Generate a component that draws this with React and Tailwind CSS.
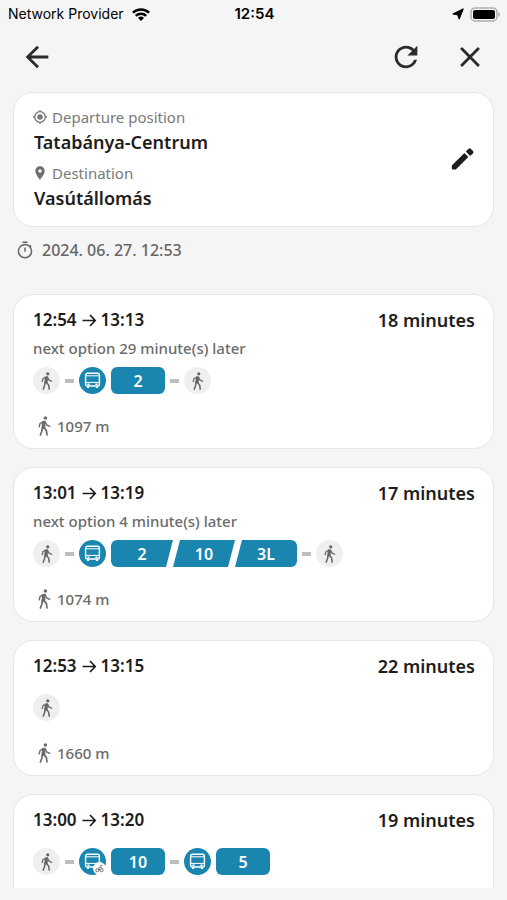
import { MdArrowBack, MdClose, MdPlace, MdRefresh } from 'react-icons/md'

const journeys = [
  {
    id: 1,
    start: '12:54',
    end: '13:13',
    duration: '18 minutes',
    next: 'next option 29 minute(s) later',
    legs: [{ type: 'walk' }, { type: 'bus', lines: ['2'] }, { type: 'walk' }],
    distance: '1097 m',
  },
  {
    id: 2,
    start: '13:01',
    end: '13:19',
    duration: '17 minutes',
    next: 'next option 4 minute(s) later',
    legs: [{ type: 'walk' }, { type: 'bus', lines: ['2', '10', '3L'] }, { type: 'walk' }],
    distance: '1074 m',
  },
  {
    id: 3,
    start: '12:53',
    end: '13:15',
    duration: '22 minutes',
    legs: [{ type: 'walk' }],
    distance: '1660 m',
  },
  {
    id: 4,
    start: '13:00',
    end: '13:20',
    duration: '19 minutes',
    legs: [{ type: 'walk' }, { type: 'bus', lines: ['10'], bike: true }, { type: 'bus', lines: ['5'] }],
  },
]

function App() {
  return (
    <div className="flex h-screen flex-col overflow-hidden bg-[#f5f5f5] pb-3 font-['Noto_Sans',sans-serif] text-[#1d1d1d]">
      <StatusBar />

      <header className="flex h-[58px] shrink-0 items-center justify-between px-5 text-[#2b2b2b]">
        <button aria-label="Back">
          <MdArrowBack className="size-[34px]" />
        </button>
        <div className="flex items-center gap-[30px]">
          <button aria-label="Refresh">
            <MdRefresh className="size-[34px]" />
          </button>
          <button aria-label="Close">
            <MdClose className="size-[34px]" />
          </button>
        </div>
      </header>

      <main className="flex min-h-0 flex-1 flex-col px-[13px] pt-1.5">
        {/* Search summary */}
        <section className="flex shrink-0 items-center justify-between rounded-[20px] border border-[#e6e6e6] bg-white pt-3 pr-[18px] pb-[15px] pl-5">
          <div>
            <Place label="Departure position" name="Tatabánya-Centrum" icon={<TargetIcon />} />
            <div className="mt-1.5">
              <Place
                label="Destination"
                name="Vasútállomás"
                icon={<MdPlace className="size-4 text-[#6f6f6f]" />}
              />
            </div>
          </div>
          <button aria-label="Edit search">
            <PencilIcon />
          </button>
        </section>

        <p className="mt-[9px] flex shrink-0 items-center gap-2 pl-[3px] text-base leading-7 font-medium text-[#666]">
          <StopwatchIcon />
          2024. 06. 27. 12:53
        </p>

        {/* Journey list */}
        <ul className="mt-[30px] min-h-0 flex-1 space-y-[18px] overflow-hidden">
          {journeys.map((journey) => (
            <JourneyCard key={journey.id} journey={journey} />
          ))}
        </ul>
      </main>
    </div>
  )
}

function StatusBar() {
  return (
    <div className="grid h-7 shrink-0 grid-cols-3 items-center pr-1.5 pl-2 font-['Inter',sans-serif] text-[15px] text-black">
      <div className="flex items-center gap-2 whitespace-nowrap">
        <span className="text-sm">Network Provider</span>
        <svg viewBox="0 0 18 13" className="h-[13px] w-[18px] shrink-0" fill="none" stroke="currentColor" strokeWidth="2.5">
          <path d="M.9 4.7a11.6 11.6 0 0 1 16.2 0M3.8 7.9a7.4 7.4 0 0 1 10.4 0" />
          <path d="M6 10a4.4 4.4 0 0 1 6 0l-3 3z" fill="currentColor" stroke="none" />
        </svg>
      </div>
      <span className="text-center font-semibold">12:54</span>
      <div className="flex items-center justify-end gap-1.5">
        <svg viewBox="0 0 12 12" className="size-3" fill="currentColor">
          <path d="M11.3.8 7.2 11.2 5.6 6.8.8 6z" stroke="currentColor" strokeWidth="1" strokeLinejoin="round" />
        </svg>
        <svg viewBox="0 0 31 15" className="h-[15px] w-[31px]">
          <rect x="1" y="1" width="26" height="13" rx="4" fill="#f5f5f5" stroke="#adadad" strokeWidth="1.5" />
          <rect x="3" y="3" width="22" height="9" rx="2" fill="#000" />
          <path d="M28.4 5v5a2.8 2.8 0 0 0 0-5z" fill="#adadad" />
        </svg>
      </div>
    </div>
  )
}

function Place({ label, name, icon }) {
  return (
    <>
      <div className="flex items-center text-[15px] leading-6 text-[#7a7a7a]">
        <span className="-ml-0.5 w-5">{icon}</span>
        {label}
      </div>
      <p className="text-lg leading-[26px] font-semibold">{name}</p>
    </>
  )
}

function JourneyCard({ journey }) {
  return (
    <li className="rounded-[20px] border border-[#e6e6e6] bg-white pt-[11px] pr-[18px] pb-[7px] pl-[19px]">
      <div className="flex items-center justify-between text-lg leading-7 font-semibold">
        <span className="flex items-center gap-1 text-[17px]">
          {journey.start}
          <ArrowIcon />
          {journey.end}
        </span>
        <span>{journey.duration}</span>
      </div>
      {journey.next && <p className="text-[15px] leading-7 font-medium text-[#6b6b6b]">{journey.next}</p>}
      <div className={`flex items-center gap-[5px] ${journey.next ? 'mt-[5px]' : 'mt-3.5'}`}>
        {journey.legs.map((leg, i) => (
          <div key={i} className="flex items-center gap-[5px]">
            {i > 0 && <span className="h-1 w-[9px] bg-[#bdbdbd]" />}
            {leg.type === 'walk' ? <WalkBadge /> : <BusLeg leg={leg} />}
          </div>
        ))}
      </div>
      <p className="mt-[18px] mb-px flex h-7 items-center gap-1.5 pl-1 text-[15px] font-medium text-[#6b6b6b]">
        {journey.distance && (
          <>
            <WalkIcon className="h-5 w-[14px]" />
            {journey.distance}
          </>
        )}
      </p>
    </li>
  )
}

function WalkBadge() {
  return (
    <span className="grid size-[27px] place-items-center rounded-full bg-[#efefef] text-[#666]">
      <WalkIcon className="h-[18px] w-[13px]" />
    </span>
  )
}

function BusLeg({ leg }) {
  const count = leg.lines.length

  const shape = (i) => {
    if (count === 1) return 'w-[54px] rounded-md'
    if (i === 0) return 'w-[62px] rounded-l-md [clip-path:polygon(0_0,100%_0,calc(100%-7px)_100%,0_100%)]'
    if (i === count - 1) return 'w-[62px] rounded-r-md [clip-path:polygon(7px_0,100%_0,100%_100%,0_100%)]'
    return 'w-[62px] [clip-path:polygon(7px_0,100%_0,calc(100%-7px)_100%,0_100%)]'
  }

  return (
    <>
      <span className="relative grid size-[27px] place-items-center rounded-full bg-[#1a86af] text-white">
        <BusIcon />
        {leg.bike && (
          <span className="absolute right-0 bottom-0 grid size-[13px] place-items-center rounded-full bg-white text-[#444]">
            <BikeIcon />
          </span>
        )}
      </span>
      <span className="flex">
        {leg.lines.map((line, i) => (
          <span
            key={line}
            className={`grid h-[27px] place-items-center bg-[#1a86af] text-base font-semibold text-white ${shape(i)}`}
          >
            {line}
          </span>
        ))}
      </span>
    </>
  )
}

function ArrowIcon() {
  return (
    <svg viewBox="0 0 16 16" className="size-4" fill="none" stroke="currentColor" strokeWidth="1.7">
      <path d="M1.5 8.5h12.5M9 3l5.2 5.5L9 14" />
    </svg>
  )
}

function WalkIcon({ className }) {
  return (
    <svg viewBox="0 0 14 20" className={className} fill="none" stroke="currentColor" strokeLinecap="round" strokeLinejoin="round">
      <circle cx="8.4" cy="2" r="1.8" fill="currentColor" stroke="none" />
      <path d="M6 5.6 8 5.5 7.6 11.8 5 12z" fill="currentColor" strokeWidth="1.3" />
      <path d="M6.2 5.6 3 7.6 2.2 10.8M8.2 6l1.6 3 3 1.3" strokeWidth="1.4" />
      <path d="M5.4 12 4.8 15.2 3.4 19M7 11.6l2.4 3L10 19" strokeWidth="1.7" />
    </svg>
  )
}

function PencilIcon() {
  return (
    <svg viewBox="0 0 24 24" className="size-6" fill="currentColor">
      <path d="M.8 19.6 13.4 7l4 4L4.8 23.4H1.6a.8.8 0 0 1-.8-.8z" />
      <path d="M14.8 5.6 17.6 2.8a1.5 1.5 0 0 1 2.1 0l2.3 2.3a1.5 1.5 0 0 1 0 2.1L19.2 10z" />
    </svg>
  )
}

function TargetIcon() {
  return (
    <svg viewBox="0 0 16 16" className="size-4" fill="none" stroke="#757575" strokeWidth="1.3">
      <circle cx="8" cy="8" r="5.3" />
      <circle cx="8" cy="8" r="2.7" fill="#757575" stroke="none" />
      <path d="M8 1v2M8 13v2M1 8h2M13 8h2" />
    </svg>
  )
}

function StopwatchIcon() {
  return (
    <svg viewBox="0 0 18 18" className="size-[18px]" fill="none" stroke="currentColor" strokeWidth="1.5">
      <circle cx="9" cy="10.2" r="6.6" />
      <path d="M6.5 1.2h5M9 6.5v4.3M13.6 4.2l1.5 1.5" />
    </svg>
  )
}

function BusIcon() {
  return (
    <svg viewBox="0 0 17 17" className="size-[17px]" fill="none" stroke="currentColor">
      <rect x="1.6" y="1.2" width="13.8" height="12.8" rx="1.8" strokeWidth="1.4" />
      <path d="M2 3.8h13M2 10.4h13" strokeWidth="1" />
      <path d="M4 14.2v1.9M13 14.2v1.9" strokeWidth="2.2" />
      <path d="M3.4 12.2h2.2M11.4 12.2h2.2" strokeWidth="1.4" />
    </svg>
  )
}

function BikeIcon() {
  return (
    <svg viewBox="0 0 10 10" className="size-[9px]" fill="none" stroke="currentColor" strokeWidth=".8">
      <circle cx="2.6" cy="7" r="1.7" />
      <circle cx="7.4" cy="7" r="1.7" />
      <path d="M5 7.4V5.6L3.8 4.6 5.8 3l1 1.6h1.4" />
      <circle cx="6.8" cy="1.7" r=".8" fill="currentColor" stroke="none" />
    </svg>
  )
}

export default App
